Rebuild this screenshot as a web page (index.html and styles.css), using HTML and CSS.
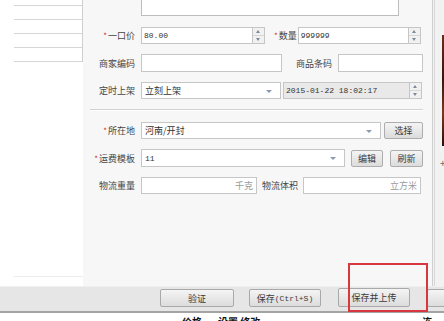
FILE: index.html
```html
<!DOCTYPE html>
<html lang="zh">
<head>
<meta charset="utf-8">
<link rel="stylesheet" href="styles.css">
</head>
<body>
<div class="top">
  <div class="left">
    <div class="list">
      <div class="lrow"></div>
      <div class="lrow"></div>
      <div class="lrow"></div>
      <div class="lrow last"></div>
    </div>
    <div class="list-rest"></div>
  </div>
  <div class="main">
    <div class="textarea"></div>

    <div class="row r1">
      <label class="lbl"><span class="req">*</span>一口价</label>
      <div class="field w112"><span class="val mono">80.00</span></div>
      <div class="spin"><i class="up"></i><i class="dn"></i></div>
      <label class="lbl2 g9"><span class="req">*</span>数量</label>
      <div class="field w111"><span class="val mono">999999</span></div>
      <div class="spin"><i class="up"></i><i class="dn"></i></div>
    </div>

    <div class="row r2">
      <label class="lbl">商家编码</label>
      <div class="field w141"></div>
      <label class="lbl2 g14">商品条码</label>
      <div class="field w85 ml6"></div>
    </div>

    <div class="row r3">
      <label class="lbl">定时上架</label>
      <div class="field w140 sel"><span class="val">立刻上架</span><i class="arrow"></i></div>
      <div class="field w127 ml2 dis"><span class="val mono">2015-01-22 18:02:17</span></div>
      <div class="spin"><i class="up"></i><i class="dn"></i></div>
    </div>

    <div class="sep"></div>

    <div class="row r4">
      <label class="lbl"><span class="req">*</span>所在地</label>
      <div class="field w240 sel"><span class="val">河南/开封</span><i class="arrow"></i></div>
      <button class="btn w39 ml3">选择</button>
    </div>

    <div class="row r5">
      <label class="lbl"><span class="req">*</span>运费模板</label>
      <div class="field w204 sel"><span class="val mono">11</span><i class="arrow"></i></div>
      <button class="btn w32 ml6">编辑</button>
      <button class="btn w33 ml7">刷新</button>
    </div>

    <div class="row r6">
      <label class="lbl">物流重量</label>
      <div class="field w116 unit"><span class="hint">千克</span></div>
      <label class="lbl2 g5">物流体积</label>
      <div class="field w118 ml5 unit"><span class="hint">立方米</span></div>
    </div>
  </div>
  <div class="side">
    <div class="side-in">
      <div class="thumb"></div>
      <div class="plus">+</div>
    </div>
  </div>
</div>

<div class="bar">
  <div class="bar-gap"></div>
  <div class="bar-body">
    <button class="btn bb w74">验证</button>
    <button class="btn bb w72 ml15"><span>保存</span><span class="mono small">(Ctrl+S)</span></button>
    <button class="btn bb w72 ml17 tall">保存并上传</button>
    <div class="btn bb stub"></div>
  </div>
</div>

<div class="foot"><span class="ft1">价格</span><span class="ft2">设置 修改</span><span class="ft3">连</span></div>

<div class="mark"></div>
</body>
</html>
```

FILE: styles.css
```css
* { box-sizing: border-box; margin: 0; padding: 0; }
html, body { width: 444px; height: 321px; overflow: hidden; }
body {
  background: #fff;
  font-family: "Noto Sans CJK SC", "Noto Sans", sans-serif;
  font-size: 9px;
  color: #454545;
  position: relative;
}
.mono { font-family: "Liberation Mono", monospace; font-size: 8px; }
.small { font-size: 8px; }

.top { display: flex; height: 286px; }

.left { width: 83px; padding-left: 14px; background: #fff; display: flex; flex-direction: column; }
.list { border-right: 1px solid #cfcfcf; padding-top: 5px; }
.lrow { height: 14px; border-top: 1px solid #d6d6d6; }
.lrow.last { border-bottom: 1px solid #d6d6d6; height: 15px; }
.list-rest { height: 215px; border-bottom: 1px solid #ececec; }

.main { width: 349px; background: #f7f7f7; padding-left: 7px; }
.textarea {
  margin-left: 51px; width: 258px; height: 16px;
  background: #fff; border: 1px solid #bdbdbd; border-top: none;
}

.row { display: flex; align-items: center; height: 17px; }
.r1 { margin-top: 11px; }
.r2 { margin-top: 10px; height: 18px; }
.r3 { margin-top: 10px; }
.r4 { margin-top: 11px; }
.r5 { margin-top: 10px; height: 18px; }
.r6 { margin-top: 10px; }

.lbl { width: 45px; text-align: right; white-space: nowrap; margin-right: 6px; line-height: 17px; letter-spacing: 0; }
.lbl2 { white-space: nowrap; line-height: 17px; }
.req { color: #d03030; font-size: 8px; margin-right: 1px; }
.g9 { margin-left: 9px; margin-right: 1px; }
.g14 { margin-left: 14px; margin-right: 0; width: 36px; }
.g5 { margin-left: 5px; }

.field {
  height: 100%; background: #fff; border: 1px solid #c6c6c6;
  display: flex; align-items: center; position: relative; padding-left: 2px;
}
.field.dis { background: #e9e9e9; }
.val { color: #333; white-space: nowrap; }
.sel .val { padding-left: 1px; }
.arrow {
  position: absolute; right: 8px; top: 7px;
  width: 0; height: 0;
  border-left: 3px solid transparent; border-right: 3px solid transparent;
  border-top: 3px solid #8a9bb0;
}
.unit { justify-content: flex-end; padding-right: 3px; }
.hint { color: #9a9a9a; }

.w112 { width: 112px; } .w111 { width: 111px; } .w141 { width: 141px; }
.w85 { width: 85px; } .w140 { width: 140px; } .w127 { width: 127px; }
.w240 { width: 240px; } .w204 { width: 204px; } .w116 { width: 116px; }
.w118 { width: 118px; } .w39 { width: 39px; } .w32 { width: 32px; }
.w33 { width: 33px; } .w74 { width: 74px; } .w72 { width: 72px; }
.ml2 { margin-left: 2px; } .ml3 { margin-left: 3px; } .ml5 { margin-left: 5px; }
.ml6 { margin-left: 6px; } .ml7 { margin-left: 7px; } .ml15 { margin-left: 15px; }
.ml17 { margin-left: 17px; }

.spin {
  width: 12px; height: 100%; border: 1px solid #c6c6c6; border-left: none;
  background: #f1f1f1; display: flex; flex-direction: column;
}
.spin i { flex: 1; position: relative; display: block; }
.spin i.up { border-bottom: 1px solid #d6d6d6; }
.spin i::after {
  content: ""; position: absolute; left: 3px; top: 2px; width: 0; height: 0;
  border-left: 2px solid transparent; border-right: 2px solid transparent;
}
.spin i.up::after { border-bottom: 3px solid #7d8a99; }
.spin i.dn::after { border-top: 3px solid #7d8a99; }

.sep {
  margin-top: 10px; width: 333px; height: 2px;
  border-top: 1px solid #d2d2d2; border-bottom: 1px solid #fff;
}

.btn {
  height: 17px; border: 1px solid #adadad; border-radius: 2px;
  background: linear-gradient(#f4f4f4, #dcdcdc);
  font-family: inherit; font-size: 9px; color: #3a3a3a;
  display: flex; align-items: center; justify-content: center; white-space: nowrap;
}

.side { width: 12px; background: #f2f2f2; border-left: 1px solid #cfcfcf; }
.side-in { margin-left: 1px; height: 100%; border-left: 1px solid #d8d8d8; padding-left: 7px; padding-top: 35px; }
.thumb {
  width: 10px; height: 115px;
  background: linear-gradient(#6b2d1c, #3a150c 40%, #7a3a1e 70%, #2a0f08);
  border-bottom: 4px solid #f2f2f2;
}
.plus { margin-top: 8px; font-size: 10px; color: #666; line-height: 10px; margin-left: -2px; }

.bar { display: flex; height: 27px; }
.bar-gap { width: 14px; background: #fff; }
.bar-body {
  flex: 1; background: #e6e6e6; border-top: 1px solid #efefef; border-bottom: 2px solid #a4a4a4;
  display: flex; align-items: flex-start; padding-top: 2px; padding-left: 160px;
}
.bb { height: 18px; border-color: #a9a9a9; }
.bb.tall { height: 19px; margin-top: -1px; }
.stub { width: 20px; margin-left: 17px; }

.foot {
  height: 8px; overflow: hidden; display: flex; align-items: flex-start;
  font-weight: bold; color: #111; font-size: 10px; line-height: 14px; padding-top: 2px;
}
.ft1 { margin-left: 182px; width: 28px; }
.ft2 { margin-left: 8px; }
.ft3 { margin-left: 162px; }

.mark {
  position: absolute; left: 348px; top: 263px; width: 80px; height: 49px;
  border: 2px solid #d8373f;
}
```
